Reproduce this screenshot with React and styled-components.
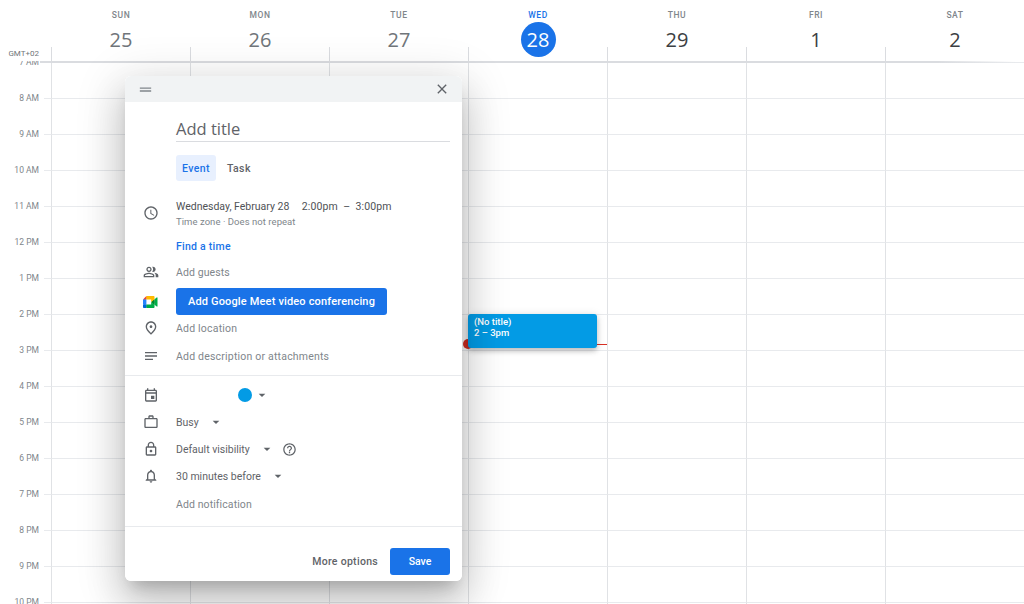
import styled, { createGlobalStyle } from "styled-components";
import {
  MdArrowDropDown,
  MdClose,
  MdDragHandle,
  MdHelpOutline,
  MdNotes,
  MdOutlineAccessTime,
  MdOutlineEvent,
  MdOutlineLock,
  MdOutlineNotifications,
  MdOutlinePeopleAlt,
  MdOutlinePlace,
  MdWorkOutline,
} from "react-icons/md";

const days = [
  { name: "SUN", num: 25, past: true },
  { name: "MON", num: 26, past: true },
  { name: "TUE", num: 27, past: true },
  { name: "WED", num: 28, today: true },
  { name: "THU", num: 29 },
  { name: "FRI", num: 1 },
  { name: "SAT", num: 2 },
];
const hours = ["7 AM", "8 AM", "9 AM", "10 AM", "11 AM", "12 PM", "1 PM", "2 PM", "3 PM", "4 PM", "5 PM", "6 PM", "7 PM", "8 PM", "9 PM", "10 PM"];

const Global = createGlobalStyle`
html,body{margin:0;padding:0;background:#fff;}
body{font-family:Roboto,"Liberation Sans",sans-serif;color:#3c4043;}
`;

const Page = styled.div`
position:relative;width:1024px;height:604px;overflow:hidden;background:#fff;
`;
const Header = styled.header`
position:relative;z-index:2;display:flex;height:61px;background:#fff;
`;
const Zone = styled.div`
width:51px;box-sizing:border-box;padding:49px 12px 0 0;
text-align:right;font-size:8px;line-height:9px;color:#70757a;
`;
const DayHead = styled.div`
position:relative;width:139px;display:flex;flex-direction:column;align-items:center;padding:10px 0 0 1px;box-sizing:border-box;
&::before{content:"";position:absolute;left:0;top:47px;bottom:0;width:1px;background:#dadce0;}
`;
const DayName = styled.div`
font-size:8.5px;line-height:11px;font-weight:500;letter-spacing:.6px;
color:${(p) => (p.$today ? "#1a73e8" : "#80868b")};
`;
const DayNum = styled.div`
width:35px;height:35px;border-radius:50%;margin-top:1px;
display:flex;align-items:center;justify-content:center;
font-family:"Open Sans",Roboto,sans-serif;font-size:20px;
background:${(p) => (p.$today ? "#1a73e8" : "transparent")};
color:${(p) => (p.$today ? "#fff" : p.$past ? "#70757a" : "#3c4043")};
`;
const Rule = styled.div`
position:relative;z-index:2;height:2px;margin:0 8px -1px 40px;
background:linear-gradient(to right,#dadce0 92%,rgba(218,220,224,0));
`;
const Row = styled.div`
display:flex;height:36px;
`;
const HourLabel = styled.div`
width:39px;margin-right:5px;margin-top:-6px;height:12px;
text-align:right;font-size:8.5px;line-height:12px;color:#80868b;
`;
const Tick = styled.div`
width:7px;border-top:1px solid #e8eaed;
`;
const Cell = styled.div`
width:139px;box-sizing:border-box;border-top:1px solid #e8eaed;border-left:1px solid #e0e2e5;
`;

const NowLine = styled.div`
position:absolute;left:468px;top:344px;width:139px;height:1px;background:#d93025;
&::before{content:"";position:absolute;left:-5px;top:-5px;width:10px;height:10px;border-radius:50%;background:#d93025;}
`;
const Event = styled.div`
position:absolute;left:468px;top:314px;width:129px;height:34px;box-sizing:border-box;
padding:2px 6px;background:#039be5;border-radius:3px;color:#fff;
font-size:9.5px;line-height:11px;font-weight:500;
box-shadow:0 3px 5px rgba(0,0,0,.2),0 1px 10px rgba(0,0,0,.12);
`;

const DialogShadow = styled.div`
position:absolute;z-index:3;left:125px;top:76px;width:337px;height:505px;border-radius:6px;
box-shadow:0 24px 38px 3px rgba(0,0,0,.14),0 9px 46px 8px rgba(0,0,0,.12),0 11px 15px -7px rgba(0,0,0,.2);
`;
const Dialog = styled.section`
position:absolute;z-index:3;left:125px;top:76px;width:337px;height:505px;
background:#fff;border-radius:6px;overflow:hidden;
`;
const DialogBar = styled.div`
height:26px;background:#f1f3f4;display:flex;align-items:center;justify-content:space-between;
padding:0 12px;
`;
const BarIcon = styled.span`
display:flex;font-size:${(p) => p.$size}px;color:${(p) => p.$color};
`;
const TitleBox = styled.div`
margin:15px 12px 0 51px;height:25px;box-sizing:border-box;border-bottom:1px solid #dadce0;
font-family:"Open Sans",Roboto,sans-serif;font-size:16.5px;line-height:23px;color:#5f6368;
`;
const FormRow = styled.div`
display:flex;align-items:center;height:${(p) => p.$h}px;margin-top:${(p) => p.$mt}px;
`;
const IconSlot = styled.div`
width:51px;flex:none;display:flex;justify-content:center;align-items:center;font-size:16px;color:#5f6368;
`;
const Tab = styled.div`
height:26px;display:flex;align-items:center;padding:0 6px;border-radius:3px;
font-size:10.5px;font-weight:500;letter-spacing:.4px;margin-right:5px;
background:${(p) => (p.$active ? "#e8f0fe" : "transparent")};
color:${(p) => (p.$active ? "#1a73e8" : "#5f6368")};
`;
const DateBlock = styled.div`
display:flex;flex-direction:column;gap:3px;
`;
const DateLine = styled.div`
display:flex;font-size:10.5px;line-height:13px;color:#4f5256;
`;
const TimeRange = styled.span`
margin-left:12.5px;white-space:pre;letter-spacing:.1px;
`;
const SubLine = styled.div`
font-size:9.5px;line-height:11px;letter-spacing:.05px;color:#80868b;
`;
const BlueLink = styled.div`
font-size:10.5px;font-weight:500;letter-spacing:.25px;color:#1a73e8;
`;
const Muted = styled.div`
font-size:10.5px;color:#80868b;letter-spacing:${(p) => p.$track || 0.1}px;
`;
const Value = styled.div`
font-size:10.5px;color:#5f6368;
`;
const MeetButton = styled.div`
width:211px;height:27px;border-radius:3px;background:#1a73e8;color:#fff;
display:flex;align-items:center;justify-content:center;font-size:11px;font-weight:500;letter-spacing:.16px;
`;
const Divider = styled.div`
height:1px;background:#e8eaed;margin-top:${(p) => p.$mt}px;
`;
const Dot = styled.div`
width:14px;height:14px;border-radius:50%;background:#039be5;margin-left:61.5px;
`;
const Caret = styled.span`
display:flex;font-size:16px;color:#5f6368;margin-left:${(p) => p.$ml}px;
`;
const Help = styled.span`
display:flex;font-size:15px;color:#5f6368;margin-left:7px;
`;
const Footer = styled.div`
display:flex;justify-content:flex-end;align-items:center;margin:21px 12px 0 0;height:27px;
`;
const MoreOptions = styled.div`
font-size:10.5px;font-weight:500;letter-spacing:.3px;color:#5f6368;margin-right:12px;
`;
const SaveButton = styled.div`
width:60px;height:27px;border-radius:3px;background:#1a73e8;color:#fff;
display:flex;align-items:center;justify-content:center;font-size:10.5px;font-weight:500;
`;

function MeetLogo() {
  return (
    <svg width="14.5" height="12" viewBox="0 0 87.5 72">
      <path fill="#00832d" d="M49.5 36l8.53 9.75 11.47 7.33 2-17.02-2-16.64-11.69 6.44z" />
      <path fill="#0066da" d="M0 51.5V66c0 3.315 2.685 6 6 6h14.5l3-10.96-3-9.54-9.95-3z" />
      <path fill="#e94235" d="M20.5 0L0 20.5l10.55 3 9.95-3 2.95-9.41z" />
      <path fill="#2684fc" d="M20.5 20.5H0v31h20.5z" />
      <path fill="#00ac47" d="M82.6 8.68L69.5 19.42v33.66l13.16 10.79c1.97 1.54 4.85.135 4.85-2.37V11c0-2.535-2.945-3.925-4.91-2.32zM49.5 36v15.5h-29V72h43c3.315 0 6-2.685 6-6V53.08z" />
      <path fill="#ffba00" d="M63.5 0h-43v20.5h29V36l20-16.57V6c0-3.315-2.685-6-6-6z" />
    </svg>
  );
}

export default function App() {
  return (
    <Page>
      <Global />
      <Header>
        <Zone>GMT+02</Zone>
        {days.map((d) => (
          <DayHead key={d.name}>
            <DayName $today={d.today}>{d.name}</DayName>
            <DayNum $today={d.today} $past={d.past}>{d.num}</DayNum>
          </DayHead>
        ))}
      </Header>
      <Rule />
      {hours.map((h) => (
        <Row key={h}>
          <HourLabel>{h}</HourLabel>
          <Tick />
          {days.map((d) => <Cell key={d.name} />)}
        </Row>
      ))}
      <NowLine />
      <Event>
        <div>(No title)</div>
        <div>2 – 3pm</div>
      </Event>
      <DialogShadow />
      <Dialog>
        <DialogBar>
          <BarIcon $size={17} $color="#80868b"><MdDragHandle /></BarIcon>
          <BarIcon $size={16} $color="#5f6368"><MdClose /></BarIcon>
        </DialogBar>
        <TitleBox>Add title</TitleBox>
        <FormRow $h={26} $mt={13}>
          <IconSlot />
          <Tab $active>Event</Tab>
          <Tab>Task</Tab>
        </FormRow>
        <FormRow $h={28} $mt={18}>
          <IconSlot><MdOutlineAccessTime /></IconSlot>
          <DateBlock>
            <DateLine>Wednesday, February 28<TimeRange>2:00pm  –  3:00pm</TimeRange></DateLine>
            <SubLine>Time zone · Does not repeat</SubLine>
          </DateBlock>
        </FormRow>
        <FormRow $h={20} $mt={9}>
          <IconSlot />
          <BlueLink>Find a time</BlueLink>
        </FormRow>
        <FormRow $h={24} $mt={4}>
          <IconSlot><MdOutlinePeopleAlt /></IconSlot>
          <Muted>Add guests</Muted>
        </FormRow>
        <FormRow $h={27} $mt={4}>
          <IconSlot><MeetLogo /></IconSlot>
          <MeetButton>Add Google Meet video conferencing</MeetButton>
        </FormRow>
        <FormRow $h={26} $mt={0}>
          <IconSlot><MdOutlinePlace /></IconSlot>
          <Muted $track={0.2}>Add location</Muted>
        </FormRow>
        <FormRow $h={26} $mt={2}>
          <IconSlot><MdNotes /></IconSlot>
          <Muted $track={0.2}>Add description or attachments</Muted>
        </FormRow>
        <Divider $mt={6} />
        <FormRow $h={24} $mt={7}>
          <IconSlot><MdOutlineEvent /></IconSlot>
          <Dot />
          <Caret $ml={2}><MdArrowDropDown /></Caret>
        </FormRow>
        <FormRow $h={24} $mt={3}>
          <IconSlot><MdWorkOutline /></IconSlot>
          <Value>Busy</Value>
          <Caret $ml={9}><MdArrowDropDown /></Caret>
        </FormRow>
        <FormRow $h={24} $mt={3}>
          <IconSlot><MdOutlineLock /></IconSlot>
          <Value>Default visibility</Value>
          <Caret $ml={9}><MdArrowDropDown /></Caret>
          <Help><MdHelpOutline /></Help>
        </FormRow>
        <FormRow $h={24} $mt={3}>
          <IconSlot><MdOutlineNotifications /></IconSlot>
          <Value>30 minutes before</Value>
          <Caret $ml={9}><MdArrowDropDown /></Caret>
        </FormRow>
        <FormRow $h={24} $mt={4}>
          <IconSlot />
          <Muted $track={0}>Add notification</Muted>
        </FormRow>
        <Divider $mt={10} />
        <Footer>
          <MoreOptions>More options</MoreOptions>
          <SaveButton>Save</SaveButton>
        </Footer>
      </Dialog>
    </Page>
  );
}
